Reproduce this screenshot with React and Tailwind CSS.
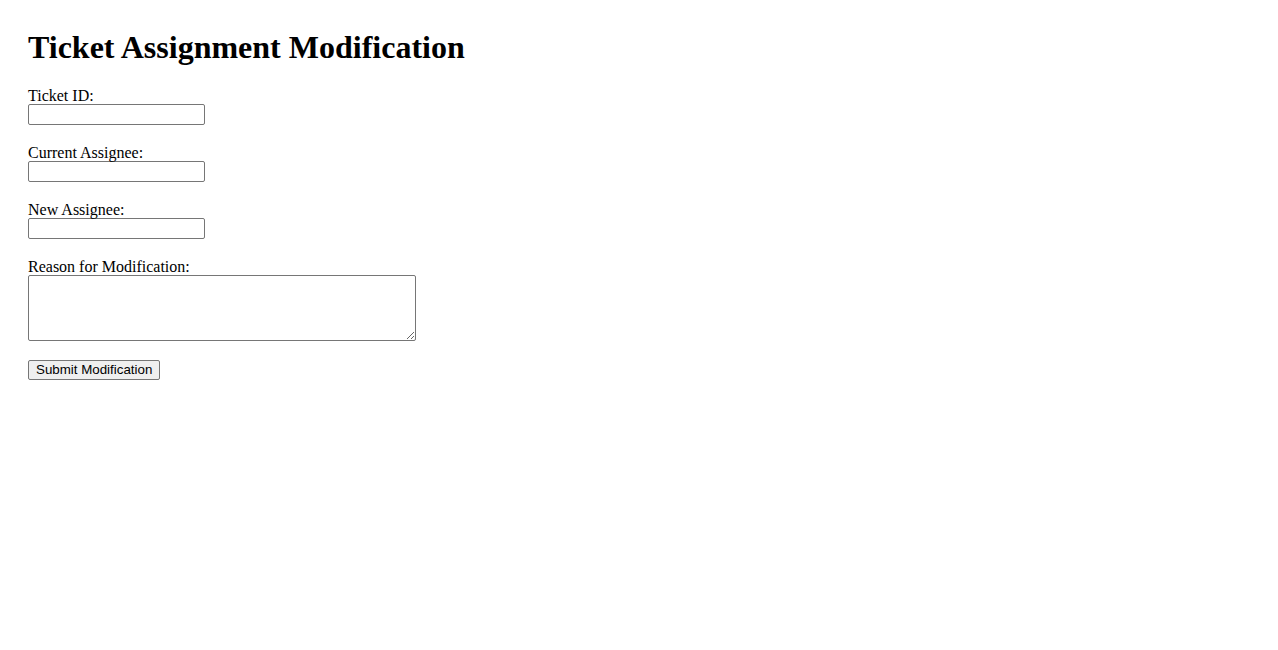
import { useState } from 'react';

const fields = [
  { name: 'ticketId', label: 'Ticket ID:' },
  { name: 'currentAssignee', label: 'Current Assignee:' },
  { name: 'newAssignee', label: 'New Assignee:' },
];

const labelClass = 'block h-[19px] pt-[1px] text-[16px] leading-[19px]';

const inputClass =
  'block w-[177px] h-[21px] border border-[#767676] rounded-[2px] px-[2px] bg-white text-[13.33px] font-["Liberation_Sans",Arial,sans-serif] outline-none';

const App = () => {
  const [form, setForm] = useState({ ticketId: '', currentAssignee: '', newAssignee: '', reason: '' });

  const handleChange = (e) => setForm({ ...form, [e.target.name]: e.target.value });

  return (
    <div className="min-h-screen bg-white px-[28px] pt-[30px] text-black font-['Liberation_Serif','Times_New_Roman',serif]">
      <h1 className="text-[32px] font-bold leading-[35px] mb-[20px]">Ticket Assignment Modification</h1>

      <form onSubmit={(e) => e.preventDefault()} className="flex flex-col items-start">
        {fields.map((f) => (
          <div key={f.name} className="mb-[17px]">
            <label htmlFor={f.name} className={labelClass}>{f.label}</label>
            <input id={f.name} name={f.name} type="text" value={form[f.name]} onChange={handleChange} className={inputClass} />
          </div>
        ))}

        <div className="mb-[19px]">
          <label htmlFor="reason" className={labelClass}>Reason for Modification:</label>
          <textarea
            id="reason"
            name="reason"
            value={form.reason}
            onChange={handleChange}
            className="block w-[388px] h-[66px] border border-[#767676] rounded-[2px] p-[2px] bg-white text-[13.33px] font-['Liberation_Mono',monospace] outline-none resize"
          />
        </div>

        <button
          type="submit"
          className="h-[20px] px-[7px] border border-[#767676] rounded-[2px] bg-[#efefef] text-[13.33px] leading-none text-black font-['Liberation_Sans',Arial,sans-serif]"
        >
          Submit Modification
        </button>
      </form>
    </div>
  );
};

export default App;
